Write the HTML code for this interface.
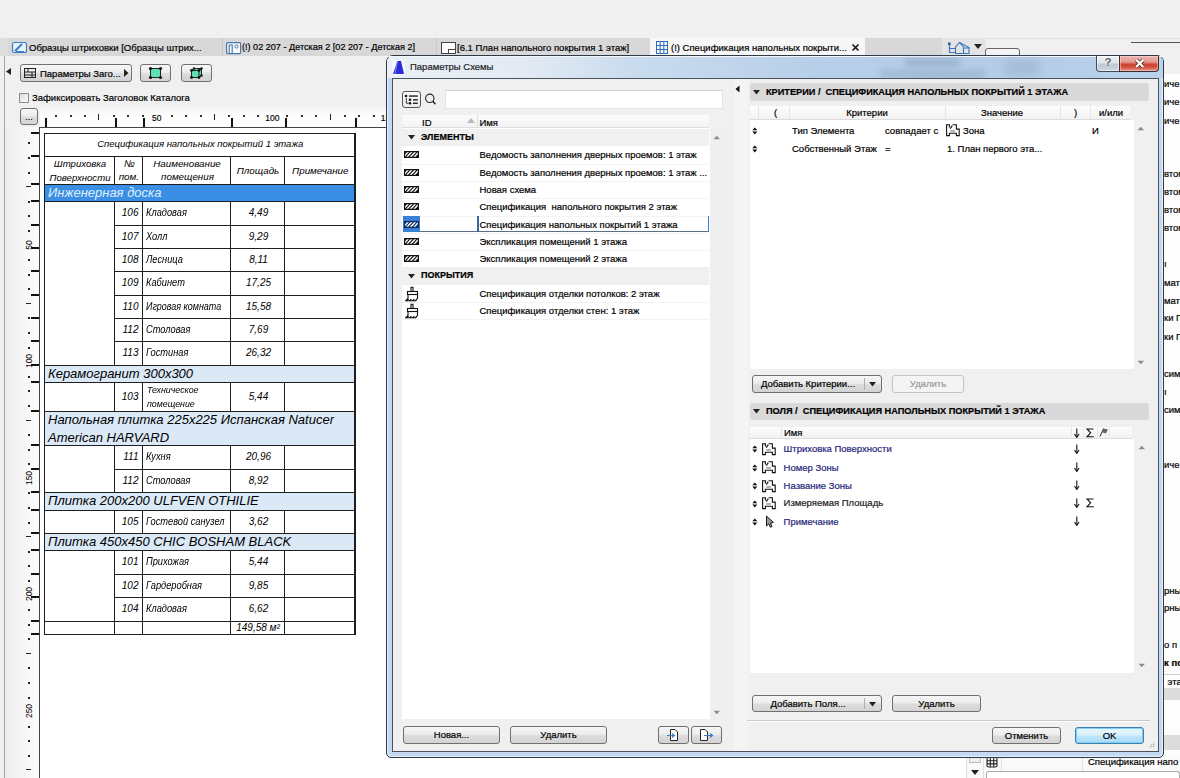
<!DOCTYPE html>
<html><head><meta charset="utf-8"><style>
html,body{margin:0;padding:0;width:1180px;height:778px;overflow:hidden;background:#f0f0f0}
body>div,body>svg{position:absolute}
.t{font-family:"Liberation Sans",sans-serif;white-space:pre;color:#000;-webkit-text-stroke:0.2px currentColor}
</style></head><body>
<div style="left:0px;top:0px;width:1180px;height:778px;background:#f0f0f0"></div>
<div style="left:0px;top:38px;width:942px;height:18px;background:#d8d8d8"></div>
<div style="left:0px;top:38px;width:8px;height:18px;background:#dedede"></div>
<div style="left:650px;top:38px;width:215px;height:18px;background:#f7f7f7"></div>
<div style="left:222px;top:38px;width:1px;height:18px;background:#c9c9c9"></div>
<div style="left:436px;top:38px;width:1px;height:18px;background:#c9c9c9"></div>
<div style="left:942px;top:38px;width:44px;height:18px;background:#e4e4e4"></div>
<div style="left:986px;top:38px;width:194px;height:1px;background:#e2e2e2"></div>
<div style="left:1131px;top:42px;width:49px;height:1px;background:#555"></div>
<div style="left:985px;top:48px;width:35px;height:12px;border:1px solid #666;border-radius:3px;background:#f4f4f4;box-sizing:border-box"></div>
<div class="t " style="left:29px;top:42.92px;font-size:9.5px;line-height:9.5px;">Образцы штриховки [Образцы штрих...</div>
<div class="t " style="left:242px;top:43.11px;font-size:9.1px;line-height:9.1px;">(!) 02 207 - Детская 2 [02 207 - Детская 2]</div>
<div class="t " style="left:457px;top:42.92px;font-size:9.5px;line-height:9.5px;">[6.1 План напольного покрытия 1 этаж]</div>
<div class="t " style="left:671px;top:42.92px;font-size:9.5px;line-height:9.5px;">(!) Спецификация напольных покрыти...</div>
<svg style="left:851px;top:43px" width="9" height="9"><path d="M1.5 1.5 L7.5 7.5 M7.5 1.5 L1.5 7.5" stroke="#111" stroke-width="1.6"/></svg>
<svg style="left:11px;top:41px" width="17" height="13"><rect x="1.5" y="1.5" width="14" height="10" rx="2" fill="#e8f2fb" stroke="#3b7fc4" stroke-width="1.2"/><path d="M4 10 L11 3" stroke="#3b7fc4" stroke-width="2"/><path d="M5 10.5 H13" stroke="#3b7fc4" stroke-width="1"/></svg>
<svg style="left:226px;top:42px" width="16" height="13"><rect x="0.6" y="0.6" width="14" height="11" rx="1" fill="#f4faff" stroke="#4a77a8" stroke-width="1.2"/><path d="M3.2 11.5 V3 H6.2 V11.5" fill="none" stroke="#4a77a8" stroke-width="1.1"/><circle cx="10.5" cy="4.5" r="1.6" fill="none" stroke="#4a77a8" stroke-width="1"/></svg>
<svg style="left:440px;top:41px" width="17" height="14"><rect x="1.5" y="1.5" width="14" height="11" fill="#fff" stroke="#444" stroke-width="1"/><rect x="8.5" y="8.5" width="7" height="4" fill="#fff" stroke="#444" stroke-width="1"/></svg>
<svg style="left:655px;top:40px" width="14" height="15"><g stroke="#2f6fb8" stroke-width="1" fill="none"><rect x="1.5" y="1.5" width="11" height="12"/><path d="M5.2 1.5V13.5M8.8 1.5V13.5M1.5 5.5H12.5M1.5 9.5H12.5"/></g></svg>
<svg style="left:947px;top:41px" width="24" height="14"><g stroke="#3a74c0" stroke-width="1.1" fill="none"><path d="M8.5 12.5V6 L12.5 1.5 L16.5 6 V12.5 Z"/><path d="M12.5 1.5 L22 6.5 V12.5 H16.5 M16.5 7 H22"/><path d="M2.5 3 V11.5 H8 M2.5 7.5 H8"/></g><rect x="1" y="1.5" width="2.6" height="2.6" fill="#2a5fa8"/></svg>
<svg style="left:974px;top:44px" width="9" height="6"><path d="M0 0H8L4 5Z" fill="#222"/></svg>
<div style="left:4px;top:56px;width:1px;height:722px;background:#a3a3a3"></div>
<svg style="left:6px;top:68px" width="6" height="8"><path d="M5 0V7L0 3.5Z" fill="#222"/></svg>
<div style="left:20px;top:64px;width:112px;height:18px;box-sizing:border-box;border:1px solid #707070;border-radius:3px;background:linear-gradient(#f6f6f6,#ececec 45%,#dcdcdc 55%,#d3d3d3);"></div>
<div class="t " style="left:40px;top:68.92px;font-size:9.5px;line-height:9.5px;">Параметры Заго...</div>
<svg style="left:23px;top:67px" width="14" height="12"><g stroke="#222" stroke-width="1" fill="none"><rect x="1.5" y="1.5" width="11" height="9"/><path d="M1.5 5H12.5M1.5 8H12.5M5 1.5V5M9 5V10.5"/></g></svg>
<svg style="left:124px;top:69px" width="5" height="8"><path d="M0 0L4.5 4L0 8Z" fill="#222"/></svg>
<div style="left:140px;top:64px;width:31px;height:18px;box-sizing:border-box;border:1px solid #707070;border-radius:3px;background:linear-gradient(#f6f6f6,#ececec 45%,#dcdcdc 55%,#d3d3d3);"></div>
<svg style="left:148px;top:66px" width="15" height="14"><rect x="2.5" y="2.5" width="10" height="9" fill="#5fe0b0" stroke="#222" stroke-width="1"/><g fill="#111"><circle cx="2.5" cy="2.5" r="1.6"/><circle cx="12.5" cy="2.5" r="1.6"/><circle cx="2.5" cy="11.5" r="1.6"/><circle cx="12.5" cy="11.5" r="1.6"/></g></svg>
<div style="left:181px;top:64px;width:31px;height:18px;box-sizing:border-box;border:1px solid #707070;border-radius:3px;background:linear-gradient(#f6f6f6,#ececec 45%,#dcdcdc 55%,#d3d3d3);"></div>
<svg style="left:189px;top:66px" width="15" height="14"><path d="M2.5 4.5 L5 2.5 H12.5 V9.5 L10 11.5 H2.5 Z" fill="#5fe0b0" stroke="#222" stroke-width="1"/><path d="M2.5 4.5H10V11.5M10 4.5L12.5 2.5" fill="none" stroke="#222"/><g fill="#111"><circle cx="2.5" cy="4.5" r="1.4"/><circle cx="10" cy="4.5" r="1.4"/><circle cx="2.5" cy="11.5" r="1.4"/><circle cx="10" cy="11.5" r="1.4"/><circle cx="5" cy="2.5" r="1.2"/><circle cx="12.5" cy="2.5" r="1.2"/><circle cx="12.5" cy="9.5" r="1.2"/></g></svg>
<div style="left:19px;top:93px;width:10px;height:10px;box-sizing:border-box;border:1px solid #8f8f8f;background:linear-gradient(135deg,#dcdcdc,#fbfbfb)"></div>
<div class="t " style="left:32px;top:93.42px;font-size:9.5px;line-height:9.5px;">Зафиксировать Заголовок Каталога</div>
<div style="left:20px;top:108px;width:18px;height:17px;box-sizing:border-box;border:1px solid #707070;border-radius:3px;background:linear-gradient(#f6f6f6,#ececec 45%,#dcdcdc 55%,#d3d3d3);"></div>
<div class="t " style="left:-121px;width:300px;text-align:center;top:112.66px;font-size:9px;line-height:9px;">...</div>
<div style="left:5px;top:127px;width:35px;height:651px;background:linear-gradient(90deg,#ececec,#f4f4f4 40%,#fdfdfd)"></div>
<div style="left:40px;top:106px;width:350px;height:22px;background:linear-gradient(#f2f2f2,#fdfdfd 40%,#fdfdfd)"></div>
<div style="left:40px;top:128px;width:926px;height:650px;background:#fff"></div>
<div style="left:39px;top:127px;width:1px;height:651px;background:#444"></div>
<div style="left:39px;top:127px;width:351px;height:1px;background:#444"></div>
<div style="left:55px;top:115px;width:2px;height:2px;background:#333"></div>
<div style="left:70px;top:115px;width:2px;height:2px;background:#333"></div>
<div style="left:84px;top:115px;width:2px;height:2px;background:#333"></div>
<div style="left:98px;top:114px;width:1px;height:6px;background:#222"></div>
<div style="left:113px;top:115px;width:2px;height:2px;background:#333"></div>
<div style="left:127px;top:115px;width:2px;height:2px;background:#333"></div>
<div style="left:142px;top:115px;width:2px;height:2px;background:#333"></div>
<div class="t " style="left:6.699999999999989px;width:300px;text-align:center;top:113.50px;font-size:8.5px;line-height:8.5px;-webkit-text-stroke:0.15px">50</div>
<div style="left:171px;top:115px;width:2px;height:2px;background:#333"></div>
<div style="left:185px;top:115px;width:2px;height:2px;background:#333"></div>
<div style="left:200px;top:115px;width:2px;height:2px;background:#333"></div>
<div style="left:214px;top:114px;width:1px;height:6px;background:#222"></div>
<div style="left:228px;top:115px;width:2px;height:2px;background:#333"></div>
<div style="left:243px;top:115px;width:2px;height:2px;background:#333"></div>
<div style="left:257px;top:115px;width:2px;height:2px;background:#333"></div>
<div class="t " style="left:122.30000000000001px;width:300px;text-align:center;top:113.50px;font-size:8.5px;line-height:8.5px;-webkit-text-stroke:0.15px">100</div>
<div style="left:286px;top:115px;width:2px;height:2px;background:#333"></div>
<div style="left:301px;top:115px;width:2px;height:2px;background:#333"></div>
<div style="left:315px;top:115px;width:2px;height:2px;background:#333"></div>
<div style="left:330px;top:114px;width:1px;height:6px;background:#222"></div>
<div style="left:344px;top:115px;width:2px;height:2px;background:#333"></div>
<div style="left:358px;top:115px;width:2px;height:2px;background:#333"></div>
<div style="left:373px;top:115px;width:2px;height:2px;background:#333"></div>
<div class="t " style="left:237.89999999999998px;width:300px;text-align:center;top:113.50px;font-size:8.5px;line-height:8.5px;-webkit-text-stroke:0.15px">150</div>
<div style="left:45px;top:118px;width:1.6000000000000014px;height:9px;background:#111"></div>
<div style="left:115px;top:118px;width:1.5999999999999943px;height:9px;background:#111"></div>
<div style="left:143px;top:118px;width:1.5999999999999943px;height:9px;background:#111"></div>
<div style="left:231px;top:118px;width:1.5999999999999943px;height:9px;background:#111"></div>
<div style="left:285px;top:118px;width:1.6000000000000227px;height:9px;background:#111"></div>
<div style="left:355px;top:118px;width:1.6000000000000227px;height:9px;background:#111"></div>
<div style="left:28.2px;top:142px;width:1.6999999999999993px;height:1.6999999999999886px;background:#222"></div>
<div style="left:28.2px;top:157px;width:1.6999999999999993px;height:1.6999999999999886px;background:#222"></div>
<div style="left:28.2px;top:172px;width:1.6999999999999993px;height:1.6999999999999886px;background:#222"></div>
<div style="left:26px;top:186px;width:5px;height:1.4000000000000057px;background:#222"></div>
<div style="left:28.2px;top:201px;width:1.6999999999999993px;height:1.6999999999999886px;background:#222"></div>
<div style="left:28.2px;top:215px;width:1.6999999999999993px;height:1.6999999999999886px;background:#222"></div>
<div style="left:28.2px;top:230px;width:1.6999999999999993px;height:1.6999999999999886px;background:#222"></div>
<div class="t" style="left:13.7px;top:239.54000000000002px;width:30px;height:10px;font-size:8.5px;line-height:10px;text-align:center;transform:rotate(-90deg);-webkit-text-stroke:0">50</div>
<div style="left:28.2px;top:259px;width:1.6999999999999993px;height:1.6999999999999886px;background:#222"></div>
<div style="left:28.2px;top:274px;width:1.6999999999999993px;height:1.6999999999999886px;background:#222"></div>
<div style="left:28.2px;top:288px;width:1.6999999999999993px;height:1.6999999999999886px;background:#222"></div>
<div style="left:26px;top:303px;width:5px;height:1.3999999999999773px;background:#222"></div>
<div style="left:28.2px;top:317px;width:1.6999999999999993px;height:1.6999999999999886px;background:#222"></div>
<div style="left:28.2px;top:332px;width:1.6999999999999993px;height:1.6999999999999886px;background:#222"></div>
<div style="left:28.2px;top:347px;width:1.6999999999999993px;height:1.6999999999999886px;background:#222"></div>
<div class="t" style="left:13.7px;top:356.18px;width:30px;height:10px;font-size:8.5px;line-height:10px;text-align:center;transform:rotate(-90deg);-webkit-text-stroke:0">100</div>
<div style="left:28.2px;top:376px;width:1.6999999999999993px;height:1.6999999999999886px;background:#222"></div>
<div style="left:28.2px;top:390px;width:1.6999999999999993px;height:1.6999999999999886px;background:#222"></div>
<div style="left:28.2px;top:405px;width:1.6999999999999993px;height:1.6999999999999886px;background:#222"></div>
<div style="left:26px;top:420px;width:5px;height:1.3999999999999773px;background:#222"></div>
<div style="left:28.2px;top:434px;width:1.6999999999999993px;height:1.6999999999999886px;background:#222"></div>
<div style="left:28.2px;top:449px;width:1.6999999999999993px;height:1.6999999999999886px;background:#222"></div>
<div style="left:28.2px;top:463px;width:1.6999999999999993px;height:1.6999999999999886px;background:#222"></div>
<div class="t" style="left:13.7px;top:472.82000000000005px;width:30px;height:10px;font-size:8.5px;line-height:10px;text-align:center;transform:rotate(-90deg);-webkit-text-stroke:0">150</div>
<div style="left:28.2px;top:492px;width:1.6999999999999993px;height:1.6999999999999886px;background:#222"></div>
<div style="left:28.2px;top:507px;width:1.6999999999999993px;height:1.6999999999999886px;background:#222"></div>
<div style="left:28.2px;top:522px;width:1.6999999999999993px;height:1.7000000000000455px;background:#222"></div>
<div style="left:26px;top:536px;width:5px;height:1.3999999999999773px;background:#222"></div>
<div style="left:28.2px;top:551px;width:1.6999999999999993px;height:1.7000000000000455px;background:#222"></div>
<div style="left:28.2px;top:565px;width:1.6999999999999993px;height:1.7000000000000455px;background:#222"></div>
<div style="left:28.2px;top:580px;width:1.6999999999999993px;height:1.7000000000000455px;background:#222"></div>
<div class="t" style="left:13.7px;top:589.46px;width:30px;height:10px;font-size:8.5px;line-height:10px;text-align:center;transform:rotate(-90deg);-webkit-text-stroke:0">200</div>
<div style="left:28.2px;top:609px;width:1.6999999999999993px;height:1.7000000000000455px;background:#222"></div>
<div style="left:28.2px;top:624px;width:1.6999999999999993px;height:1.7000000000000455px;background:#222"></div>
<div style="left:28.2px;top:638px;width:1.6999999999999993px;height:1.7000000000000455px;background:#222"></div>
<div style="left:26px;top:653px;width:5px;height:1.3999999999999773px;background:#222"></div>
<div style="left:28.2px;top:667px;width:1.6999999999999993px;height:1.7000000000000455px;background:#222"></div>
<div style="left:28.2px;top:682px;width:1.6999999999999993px;height:1.7000000000000455px;background:#222"></div>
<div style="left:28.2px;top:697px;width:1.6999999999999993px;height:1.7000000000000455px;background:#222"></div>
<div class="t" style="left:13.7px;top:706.1px;width:30px;height:10px;font-size:8.5px;line-height:10px;text-align:center;transform:rotate(-90deg);-webkit-text-stroke:0">250</div>
<div style="left:28.2px;top:726px;width:1.6999999999999993px;height:1.7000000000000455px;background:#222"></div>
<div style="left:28.2px;top:740px;width:1.6999999999999993px;height:1.7000000000000455px;background:#222"></div>
<div style="left:28.2px;top:755px;width:1.6999999999999993px;height:1.7000000000000455px;background:#222"></div>
<div style="left:26px;top:769px;width:5px;height:1.3999999999999773px;background:#222"></div>
<div style="left:30.5px;top:132.2px;width:8.0px;height:2.0px;background:#111"></div>
<div style="left:30.5px;top:155.2px;width:8.0px;height:2.0px;background:#111"></div>
<div style="left:30.5px;top:183.2px;width:8.0px;height:2.0px;background:#111"></div>
<div style="left:30.5px;top:200.2px;width:8.0px;height:2.0px;background:#111"></div>
<div style="left:30.5px;top:224.2px;width:8.0px;height:2.0px;background:#111"></div>
<div style="left:30.5px;top:247.2px;width:8.0px;height:2.0px;background:#111"></div>
<div style="left:30.5px;top:270.2px;width:8.0px;height:2.0px;background:#111"></div>
<div style="left:30.5px;top:294.2px;width:8.0px;height:2.0px;background:#111"></div>
<div style="left:30.5px;top:317.2px;width:8.0px;height:2.0px;background:#111"></div>
<div style="left:30.5px;top:340.2px;width:8.0px;height:2.0px;background:#111"></div>
<div style="left:30.5px;top:364.2px;width:8.0px;height:2.0px;background:#111"></div>
<div style="left:30.5px;top:381.2px;width:8.0px;height:2.0px;background:#111"></div>
<div style="left:30.5px;top:410.2px;width:8.0px;height:2.0px;background:#111"></div>
<div style="left:30.5px;top:444.2px;width:8.0px;height:2.0px;background:#111"></div>
<div style="left:30.5px;top:468.2px;width:8.0px;height:2.0px;background:#111"></div>
<div style="left:30.5px;top:491.2px;width:8.0px;height:2.0px;background:#111"></div>
<div style="left:30.5px;top:509.2px;width:8.0px;height:2.0px;background:#111"></div>
<div style="left:30.5px;top:532.2px;width:8.0px;height:2.0px;background:#111"></div>
<div style="left:30.5px;top:549.2px;width:8.0px;height:2.0px;background:#111"></div>
<div style="left:30.5px;top:573.2px;width:8.0px;height:2.0px;background:#111"></div>
<div style="left:30.5px;top:596.2px;width:8.0px;height:2.0px;background:#111"></div>
<div style="left:30.5px;top:620.2px;width:8.0px;height:2.0px;background:#111"></div>
<div style="left:30.5px;top:633.2px;width:8.0px;height:2.0px;background:#111"></div>
<div style="left:45px;top:184px;width:310px;height:17px;background:#3a8ee4"></div>
<div style="left:45px;top:365px;width:310px;height:17px;background:#dbe9f7"></div>
<div style="left:45px;top:411px;width:310px;height:34px;background:#dbe9f7"></div>
<div style="left:45px;top:492px;width:310px;height:18px;background:#dbe9f7"></div>
<div style="left:45px;top:533px;width:310px;height:17px;background:#dbe9f7"></div>
<div style="left:44px;top:132.9px;width:312px;height:1.299999999999983px;background:#1e1e1e"></div>
<div style="left:44px;top:155.9px;width:312px;height:1.299999999999983px;background:#1e1e1e"></div>
<div style="left:44px;top:183.9px;width:312px;height:1.299999999999983px;background:#1e1e1e"></div>
<div style="left:44px;top:200.9px;width:312px;height:1.299999999999983px;background:#1e1e1e"></div>
<div style="left:44px;top:364.9px;width:312px;height:1.3000000000000114px;background:#1e1e1e"></div>
<div style="left:44px;top:381.9px;width:312px;height:1.3000000000000114px;background:#1e1e1e"></div>
<div style="left:44px;top:410.9px;width:312px;height:1.3000000000000114px;background:#1e1e1e"></div>
<div style="left:44px;top:444.9px;width:312px;height:1.3000000000000114px;background:#1e1e1e"></div>
<div style="left:44px;top:491.9px;width:312px;height:1.3000000000000114px;background:#1e1e1e"></div>
<div style="left:44px;top:509.9px;width:312px;height:1.3000000000000114px;background:#1e1e1e"></div>
<div style="left:44px;top:532.9px;width:312px;height:1.3000000000000682px;background:#1e1e1e"></div>
<div style="left:44px;top:549.9px;width:312px;height:1.3000000000000682px;background:#1e1e1e"></div>
<div style="left:44px;top:620.9px;width:312px;height:1.3000000000000682px;background:#1e1e1e"></div>
<div style="left:44px;top:633.9px;width:312px;height:1.3000000000000682px;background:#1e1e1e"></div>
<div style="left:114px;top:224.9px;width:242px;height:1.299999999999983px;background:#1e1e1e"></div>
<div style="left:114px;top:247.9px;width:242px;height:1.299999999999983px;background:#1e1e1e"></div>
<div style="left:114px;top:270.9px;width:242px;height:1.3000000000000114px;background:#1e1e1e"></div>
<div style="left:114px;top:294.9px;width:242px;height:1.3000000000000114px;background:#1e1e1e"></div>
<div style="left:114px;top:317.9px;width:242px;height:1.3000000000000114px;background:#1e1e1e"></div>
<div style="left:114px;top:340.9px;width:242px;height:1.3000000000000114px;background:#1e1e1e"></div>
<div style="left:114px;top:468.9px;width:242px;height:1.3000000000000114px;background:#1e1e1e"></div>
<div style="left:114px;top:573.9px;width:242px;height:1.3000000000000682px;background:#1e1e1e"></div>
<div style="left:114px;top:596.9px;width:242px;height:1.3000000000000682px;background:#1e1e1e"></div>
<div style="left:43.9px;top:133px;width:1.3000000000000043px;height:501px;background:#1e1e1e"></div>
<div style="left:354.4px;top:133px;width:1.3000000000000114px;height:501px;background:#1e1e1e"></div>
<div style="left:113.9px;top:156px;width:1.2999999999999972px;height:28px;background:#1e1e1e"></div>
<div style="left:141.9px;top:156px;width:1.299999999999983px;height:28px;background:#1e1e1e"></div>
<div style="left:229.9px;top:156px;width:1.299999999999983px;height:28px;background:#1e1e1e"></div>
<div style="left:283.9px;top:156px;width:1.3000000000000114px;height:28px;background:#1e1e1e"></div>
<div style="left:113.9px;top:201px;width:1.2999999999999972px;height:164px;background:#1e1e1e"></div>
<div style="left:141.9px;top:201px;width:1.299999999999983px;height:164px;background:#1e1e1e"></div>
<div style="left:229.9px;top:201px;width:1.299999999999983px;height:164px;background:#1e1e1e"></div>
<div style="left:283.9px;top:201px;width:1.3000000000000114px;height:164px;background:#1e1e1e"></div>
<div style="left:113.9px;top:382px;width:1.2999999999999972px;height:29px;background:#1e1e1e"></div>
<div style="left:141.9px;top:382px;width:1.299999999999983px;height:29px;background:#1e1e1e"></div>
<div style="left:229.9px;top:382px;width:1.299999999999983px;height:29px;background:#1e1e1e"></div>
<div style="left:283.9px;top:382px;width:1.3000000000000114px;height:29px;background:#1e1e1e"></div>
<div style="left:113.9px;top:445px;width:1.2999999999999972px;height:47px;background:#1e1e1e"></div>
<div style="left:141.9px;top:445px;width:1.299999999999983px;height:47px;background:#1e1e1e"></div>
<div style="left:229.9px;top:445px;width:1.299999999999983px;height:47px;background:#1e1e1e"></div>
<div style="left:283.9px;top:445px;width:1.3000000000000114px;height:47px;background:#1e1e1e"></div>
<div style="left:113.9px;top:510px;width:1.2999999999999972px;height:23px;background:#1e1e1e"></div>
<div style="left:141.9px;top:510px;width:1.299999999999983px;height:23px;background:#1e1e1e"></div>
<div style="left:229.9px;top:510px;width:1.299999999999983px;height:23px;background:#1e1e1e"></div>
<div style="left:283.9px;top:510px;width:1.3000000000000114px;height:23px;background:#1e1e1e"></div>
<div style="left:113.9px;top:550px;width:1.2999999999999972px;height:84px;background:#1e1e1e"></div>
<div style="left:141.9px;top:550px;width:1.299999999999983px;height:84px;background:#1e1e1e"></div>
<div style="left:229.9px;top:550px;width:1.299999999999983px;height:84px;background:#1e1e1e"></div>
<div style="left:283.9px;top:550px;width:1.3000000000000114px;height:84px;background:#1e1e1e"></div>
<div class="t " style="left:50.19999999999999px;width:300px;text-align:center;top:139.42px;font-size:9.5px;line-height:9.5px;font-style:italic;-webkit-text-stroke:0;">Спецификация напольных покрытий 1 этажа</div>
<div class="t " style="left:-70px;width:300px;text-align:center;top:159.37px;font-size:9.6px;line-height:9.6px;font-style:italic;-webkit-text-stroke:0;">Штриховка</div>
<div class="t " style="left:-70px;width:300px;text-align:center;top:172.57px;font-size:9.6px;line-height:9.6px;font-style:italic;-webkit-text-stroke:0;">Поверхности</div>
<div class="t " style="left:-21px;width:300px;text-align:center;top:159.28px;font-size:9.8px;line-height:9.8px;font-style:italic;-webkit-text-stroke:0;">№</div>
<div class="t " style="left:-21.19999999999999px;width:300px;text-align:center;top:172.28px;font-size:9.8px;line-height:9.8px;font-style:italic;-webkit-text-stroke:0;">пом.</div>
<div class="t " style="left:37px;width:300px;text-align:center;top:159.28px;font-size:9.8px;line-height:9.8px;font-style:italic;-webkit-text-stroke:0;">Наименование</div>
<div class="t " style="left:37.5px;width:300px;text-align:center;top:172.08px;font-size:9.8px;line-height:9.8px;font-style:italic;-webkit-text-stroke:0;">помещения</div>
<div class="t " style="left:108px;width:300px;text-align:center;top:166.08px;font-size:9.8px;line-height:9.8px;font-style:italic;-webkit-text-stroke:0;">Площадь</div>
<div class="t " style="left:170.3px;width:300px;text-align:center;top:166.08px;font-size:9.8px;line-height:9.8px;font-style:italic;-webkit-text-stroke:0;">Примечание</div>
<div class="t " style="left:48px;top:186.23px;font-size:13px;line-height:13px;font-style:italic;-webkit-text-stroke:0;color:#dff0ff">Инженерная доска</div>
<div class="t " style="left:48px;top:367.23px;font-size:13px;line-height:13px;font-style:italic;-webkit-text-stroke:0;">Керамогранит 300x300</div>
<div class="t " style="left:48px;top:413.23px;font-size:13px;line-height:13px;font-style:italic;-webkit-text-stroke:0;">Напольная плитка 225x225 Испанская Natucer</div>
<div class="t " style="left:48px;top:430.73px;font-size:13px;line-height:13px;font-style:italic;-webkit-text-stroke:0;">American HARVARD</div>
<div class="t " style="left:48px;top:494.23px;font-size:13px;line-height:13px;font-style:italic;-webkit-text-stroke:0;">Плитка 200x200 ULFVEN OTHILIE</div>
<div class="t " style="left:48px;top:535.23px;font-size:13px;line-height:13px;font-style:italic;-webkit-text-stroke:0;">Плитка 450x450 CHIC BOSHAM BLACK</div>
<div class="t " style="left:-161.5px;width:300px;text-align:right;top:208.18px;font-size:10px;line-height:10px;font-style:italic;-webkit-text-stroke:0;">106</div>
<div class="t " style="left:146px;top:208.04px;font-size:10.3px;line-height:10.3px;font-style:italic;-webkit-text-stroke:0;;transform:scaleX(0.9);transform-origin:left">Кладовая</div>
<div class="t " style="left:108.5px;width:300px;text-align:center;top:208.18px;font-size:10px;line-height:10px;font-style:italic;-webkit-text-stroke:0;">4,49</div>
<div class="t " style="left:-161.5px;width:300px;text-align:right;top:231.68px;font-size:10px;line-height:10px;font-style:italic;-webkit-text-stroke:0;">107</div>
<div class="t " style="left:146px;top:231.54px;font-size:10.3px;line-height:10.3px;font-style:italic;-webkit-text-stroke:0;;transform:scaleX(0.9);transform-origin:left">Холл</div>
<div class="t " style="left:108.5px;width:300px;text-align:center;top:231.68px;font-size:10px;line-height:10px;font-style:italic;-webkit-text-stroke:0;">9,29</div>
<div class="t " style="left:-161.5px;width:300px;text-align:right;top:254.68px;font-size:10px;line-height:10px;font-style:italic;-webkit-text-stroke:0;">108</div>
<div class="t " style="left:146px;top:254.54px;font-size:10.3px;line-height:10.3px;font-style:italic;-webkit-text-stroke:0;;transform:scaleX(0.9);transform-origin:left">Лесница</div>
<div class="t " style="left:108.5px;width:300px;text-align:center;top:254.68px;font-size:10px;line-height:10px;font-style:italic;-webkit-text-stroke:0;">8,11</div>
<div class="t " style="left:-161.5px;width:300px;text-align:right;top:278.18px;font-size:10px;line-height:10px;font-style:italic;-webkit-text-stroke:0;">109</div>
<div class="t " style="left:146px;top:278.04px;font-size:10.3px;line-height:10.3px;font-style:italic;-webkit-text-stroke:0;;transform:scaleX(0.9);transform-origin:left">Кабинет</div>
<div class="t " style="left:108.5px;width:300px;text-align:center;top:278.18px;font-size:10px;line-height:10px;font-style:italic;-webkit-text-stroke:0;">17,25</div>
<div class="t " style="left:-161.5px;width:300px;text-align:right;top:301.68px;font-size:10px;line-height:10px;font-style:italic;-webkit-text-stroke:0;">110</div>
<div class="t " style="left:146px;top:301.54px;font-size:10.3px;line-height:10.3px;font-style:italic;-webkit-text-stroke:0;;transform:scaleX(0.87);transform-origin:left">Игровая комната</div>
<div class="t " style="left:108.5px;width:300px;text-align:center;top:301.68px;font-size:10px;line-height:10px;font-style:italic;-webkit-text-stroke:0;">15,58</div>
<div class="t " style="left:-161.5px;width:300px;text-align:right;top:324.68px;font-size:10px;line-height:10px;font-style:italic;-webkit-text-stroke:0;">112</div>
<div class="t " style="left:146px;top:324.54px;font-size:10.3px;line-height:10.3px;font-style:italic;-webkit-text-stroke:0;;transform:scaleX(0.9);transform-origin:left">Столовая</div>
<div class="t " style="left:108.5px;width:300px;text-align:center;top:324.68px;font-size:10px;line-height:10px;font-style:italic;-webkit-text-stroke:0;">7,69</div>
<div class="t " style="left:-161.5px;width:300px;text-align:right;top:348.18px;font-size:10px;line-height:10px;font-style:italic;-webkit-text-stroke:0;">113</div>
<div class="t " style="left:146px;top:348.04px;font-size:10.3px;line-height:10.3px;font-style:italic;-webkit-text-stroke:0;;transform:scaleX(0.9);transform-origin:left">Гостиная</div>
<div class="t " style="left:108.5px;width:300px;text-align:center;top:348.18px;font-size:10px;line-height:10px;font-style:italic;-webkit-text-stroke:0;">26,32</div>
<div class="t " style="left:-161.5px;width:300px;text-align:right;top:391.68px;font-size:10px;line-height:10px;font-style:italic;-webkit-text-stroke:0;">103</div>
<div class="t " style="left:146.5px;top:384.98px;font-size:9.8px;line-height:9.8px;font-style:italic;-webkit-text-stroke:0;;transform:scaleX(0.9);transform-origin:left">Техническое</div>
<div class="t " style="left:146.5px;top:398.58px;font-size:9.8px;line-height:9.8px;font-style:italic;-webkit-text-stroke:0;;transform:scaleX(0.9);transform-origin:left">помещение</div>
<div class="t " style="left:108.5px;width:300px;text-align:center;top:391.68px;font-size:10px;line-height:10px;font-style:italic;-webkit-text-stroke:0;">5,44</div>
<div class="t " style="left:-161.5px;width:300px;text-align:right;top:452.18px;font-size:10px;line-height:10px;font-style:italic;-webkit-text-stroke:0;">111</div>
<div class="t " style="left:146px;top:452.04px;font-size:10.3px;line-height:10.3px;font-style:italic;-webkit-text-stroke:0;;transform:scaleX(0.9);transform-origin:left">Кухня</div>
<div class="t " style="left:108.5px;width:300px;text-align:center;top:452.18px;font-size:10px;line-height:10px;font-style:italic;-webkit-text-stroke:0;">20,96</div>
<div class="t " style="left:-161.5px;width:300px;text-align:right;top:475.68px;font-size:10px;line-height:10px;font-style:italic;-webkit-text-stroke:0;">112</div>
<div class="t " style="left:146px;top:475.54px;font-size:10.3px;line-height:10.3px;font-style:italic;-webkit-text-stroke:0;;transform:scaleX(0.9);transform-origin:left">Столовая</div>
<div class="t " style="left:108.5px;width:300px;text-align:center;top:475.68px;font-size:10px;line-height:10px;font-style:italic;-webkit-text-stroke:0;">8,92</div>
<div class="t " style="left:-161.5px;width:300px;text-align:right;top:516.68px;font-size:10px;line-height:10px;font-style:italic;-webkit-text-stroke:0;">105</div>
<div class="t " style="left:146px;top:516.54px;font-size:10.3px;line-height:10.3px;font-style:italic;-webkit-text-stroke:0;;transform:scaleX(0.9);transform-origin:left">Гостевой санузел</div>
<div class="t " style="left:108.5px;width:300px;text-align:center;top:516.68px;font-size:10px;line-height:10px;font-style:italic;-webkit-text-stroke:0;">3,62</div>
<div class="t " style="left:-161.5px;width:300px;text-align:right;top:557.18px;font-size:10px;line-height:10px;font-style:italic;-webkit-text-stroke:0;">101</div>
<div class="t " style="left:146px;top:557.04px;font-size:10.3px;line-height:10.3px;font-style:italic;-webkit-text-stroke:0;;transform:scaleX(0.9);transform-origin:left">Прихожая</div>
<div class="t " style="left:108.5px;width:300px;text-align:center;top:557.18px;font-size:10px;line-height:10px;font-style:italic;-webkit-text-stroke:0;">5,44</div>
<div class="t " style="left:-161.5px;width:300px;text-align:right;top:580.68px;font-size:10px;line-height:10px;font-style:italic;-webkit-text-stroke:0;">102</div>
<div class="t " style="left:146px;top:580.54px;font-size:10.3px;line-height:10.3px;font-style:italic;-webkit-text-stroke:0;;transform:scaleX(0.9);transform-origin:left">Гардеробная</div>
<div class="t " style="left:108.5px;width:300px;text-align:center;top:580.68px;font-size:10px;line-height:10px;font-style:italic;-webkit-text-stroke:0;">9,85</div>
<div class="t " style="left:-161.5px;width:300px;text-align:right;top:604.18px;font-size:10px;line-height:10px;font-style:italic;-webkit-text-stroke:0;">104</div>
<div class="t " style="left:146px;top:604.04px;font-size:10.3px;line-height:10.3px;font-style:italic;-webkit-text-stroke:0;;transform:scaleX(0.9);transform-origin:left">Кладовая</div>
<div class="t " style="left:108.5px;width:300px;text-align:center;top:604.18px;font-size:10px;line-height:10px;font-style:italic;-webkit-text-stroke:0;">6,62</div>
<div class="t " style="left:108px;width:300px;text-align:center;top:622.68px;font-size:10px;line-height:10px;font-style:italic;-webkit-text-stroke:0;">149,58 м²</div>
<div style="left:1163px;top:74px;width:17px;height:683px;background:#fdfdfd"></div>
<div class="t " style="left:1164px;top:78.92px;font-size:9.5px;line-height:9.5px;">иче</div>
<div class="t " style="left:1164px;top:97.42px;font-size:9.5px;line-height:9.5px;">иче</div>
<div class="t " style="left:1164px;top:115.72px;font-size:9.5px;line-height:9.5px;">иче</div>
<div class="t " style="left:1164px;top:169.22px;font-size:9.5px;line-height:9.5px;">втом</div>
<div class="t " style="left:1164px;top:186.72px;font-size:9.5px;line-height:9.5px;">втом</div>
<div class="t " style="left:1164px;top:205.32px;font-size:9.5px;line-height:9.5px;">втом</div>
<div class="t " style="left:1164px;top:222.72px;font-size:9.5px;line-height:9.5px;">втом</div>
<div class="t " style="left:1164px;top:259.42px;font-size:9.5px;line-height:9.5px;">ı</div>
<div class="t " style="left:1164px;top:278.42px;font-size:9.5px;line-height:9.5px;">мат</div>
<div class="t " style="left:1164px;top:296.42px;font-size:9.5px;line-height:9.5px;">мат</div>
<div class="t " style="left:1164px;top:313.42px;font-size:9.5px;line-height:9.5px;">ки П</div>
<div class="t " style="left:1164px;top:332.42px;font-size:9.5px;line-height:9.5px;">ки П</div>
<div class="t " style="left:1164px;top:369.42px;font-size:9.5px;line-height:9.5px;">сим</div>
<div class="t " style="left:1164px;top:387.42px;font-size:9.5px;line-height:9.5px;">ı</div>
<div class="t " style="left:1164px;top:405.42px;font-size:9.5px;line-height:9.5px;">симы</div>
<div class="t " style="left:1164px;top:460.12px;font-size:9.5px;line-height:9.5px;">иче</div>
<div class="t " style="left:1164px;top:586.42px;font-size:9.5px;line-height:9.5px;">рны</div>
<div class="t " style="left:1164px;top:603.42px;font-size:9.5px;line-height:9.5px;">рны</div>
<div class="t " style="left:1164px;top:640.42px;font-size:9.5px;line-height:9.5px;">о п</div>
<div class="t " style="left:1164px;top:658.42px;font-size:9.5px;line-height:9.5px;font-weight:bold">к по</div>
<div style="left:1163px;top:674px;width:17px;height:13px;background:#fff;border-top:1px solid #ccc;box-sizing:border-box"></div>
<div class="t " style="left:1167.5px;top:676.62px;font-size:9.5px;line-height:9.5px;">эта</div>
<div style="left:1163px;top:688px;width:17px;height:12px;background:#dcdcdc"></div>
<div style="left:1163px;top:735px;width:17px;height:15px;background:#dcdcdc"></div>
<div style="left:966px;top:757px;width:214px;height:21px;background:#fafafa"></div>
<div style="left:966px;top:757px;width:1px;height:21px;background:#ddd"></div>
<div style="left:969px;top:757px;width:12px;height:6px;border:1px solid #bbb;background:#eee;box-sizing:border-box"></div>
<div style="left:983px;top:757px;width:1px;height:21px;background:#e0e0e0"></div>
<svg style="left:986px;top:757px" width="12" height="11"><g stroke="#222" stroke-width="1.1" fill="none"><rect x="1" y="0.5" width="10" height="9.5" rx="1.5"/><path d="M4.3 0.5V10M7.7 0.5V10M1 3.7H11M1 6.9H11"/></g></svg>
<div style="left:1001px;top:757px;width:1px;height:14px;background:#e2e2e2"></div>
<div style="left:1082px;top:757px;width:1px;height:14px;background:#e2e2e2"></div>
<div class="t " style="left:1088px;top:757.42px;font-size:9.5px;line-height:9.5px;">Спецификация напо</div>
<svg style="left:971px;top:770px" width="9" height="6"><path d="M0 0H8L4 5Z" fill="#222"/></svg>
<div style="left:986px;top:771px;width:194px;height:7px;border:1px solid #aaa;border-bottom:none;border-radius:3px 3px 0 0;background:#fff;box-sizing:border-box"></div>
<div style="left:386px;top:55px;width:778px;height:703px;box-sizing:border-box;border:1px solid #2e3a46;border-radius:7px 7px 5px 5px;background:#c4daf2;box-shadow:inset 0 0 0 1px #e6f1fb"></div>
<div style="left:387px;top:56px;width:776px;height:22px;border-radius:6px 6px 0 0;background:linear-gradient(90deg,#eaf0f6 0%,#e2eaf4 18%,#c9dbee 32%,#b8cfe9 55%,#b4cce8 80%,#bad2ec 100%)"></div>
<div style="left:387px;top:56px;width:776px;height:1px;background:#f4f8fc"></div>
<div style="left:905px;top:59px;width:55px;height:7px;background:#7f98b5;filter:blur(3px);opacity:.55"></div>
<div style="left:880px;top:70px;width:105px;height:8px;background:#8aa3bf;filter:blur(3px);opacity:.5"></div>
<div style="left:1005px;top:60px;width:35px;height:16px;background:#8fa6c0;filter:blur(4px);opacity:.4"></div>
<svg style="left:392px;top:60px" width="13" height="15"><rect x="0" y="0" width="13" height="15" fill="#f4f6fb"/><path d="M1 14 L5.5 1 H9 L12 14 Z" fill="#2b2bd9"/><path d="M5.5 1 L3 14" stroke="#7b8cf0" stroke-width="1"/></svg>
<div class="t " style="left:410px;top:62.22px;font-size:9.5px;line-height:9.5px;color:#1e1e1e">Параметры Схемы</div>
<div style="left:1096px;top:56px;width:24px;height:16px;box-sizing:border-box;border:1px solid #3f4a56;border-top:none;border-radius:0 0 0 4px;background:linear-gradient(#f0f3f7,#dce2e9 45%,#bfc8d2 55%,#ccd4dc);box-shadow:inset 0 0 0 1px rgba(255,255,255,.6)"></div>
<div class="t " style="left:958px;width:300px;text-align:center;top:57.46px;font-size:11.5px;line-height:11.5px;color:#5a5f66;font-weight:bold;-webkit-text-stroke:0;text-shadow:0 0 1px #fff,0 0 2px #fff">?</div>
<div style="left:1119px;top:56px;width:40px;height:16px;box-sizing:border-box;border:1px solid #3d2a2a;border-top:none;border-radius:0 0 4px 0;background:linear-gradient(#ecb4ae,#e39a90 40%,#cf4535 55%,#d24a36 70%,#e2958a);box-shadow:inset 0 0 0 1px rgba(255,220,220,.5)"></div>
<svg style="left:1134px;top:58px" width="12" height="11"><path d="M2.2 1.8 L9.3 9 M9.3 1.8 L2.2 9" stroke="#4a1812" stroke-width="3.8" opacity=".8"/><path d="M2.2 1.8 L9.3 9 M9.3 1.8 L2.2 9" stroke="#fff" stroke-width="2.3"/></svg>
<div style="left:392px;top:78px;width:767px;height:674px;box-sizing:border-box;border:1px solid #48525c;background:#f0f0f0"></div>
<div style="left:734px;top:79px;width:14px;height:672px;background:#f4f4f4"></div>
<div style="left:402px;top:91px;width:19px;height:17px;box-sizing:border-box;border:1.5px solid #555;border-radius:3px;background:linear-gradient(#fbfbfb,#ececec)"></div>
<svg style="left:404px;top:94px" width="15" height="12"><g fill="#111"><circle cx="2" cy="2" r="1.3"/><circle cx="6" cy="5.8" r="1.3"/><circle cx="6" cy="9.2" r="1.3"/><rect x="5" y="1.4" width="8.8" height="1.3"/><rect x="9" y="5.2" width="4.8" height="1.3"/><rect x="9" y="8.6" width="4.8" height="1.3"/></g><path d="M2.3 4 V9.2 H4.3" fill="none" stroke="#222" stroke-width="0.9"/></svg>
<svg style="left:424px;top:92px" width="14" height="14"><circle cx="5.8" cy="6.3" r="4.2" fill="none" stroke="#222" stroke-width="1.1"/><path d="M8.8 9.3 L11.5 12.3" stroke="#222" stroke-width="1.4"/></svg>
<div style="left:445px;top:90px;width:278px;height:19px;box-sizing:border-box;border:1px solid #e2e2e2;border-top-color:#d0d0d0;background:#fff"></div>
<div style="left:402px;top:115px;width:307px;height:13px;background:linear-gradient(#fbfbfb,#f3f3f3);border-bottom:1px solid #dedede;box-sizing:border-box"></div>
<div style="left:477px;top:115px;width:1px;height:13px;background:#e0e0e0"></div>
<div class="t " style="left:422px;top:117.62px;font-size:9.5px;line-height:9.5px;">ID</div>
<svg style="left:467px;top:118px" width="9" height="6"><path d="M0 5H8L4 0Z" fill="#bbb"/></svg>
<div class="t " style="left:479.5px;top:117.62px;font-size:9.5px;line-height:9.5px;">Имя</div>
<div style="left:402px;top:128px;width:308px;height:591px;background:#fff"></div>
<div style="left:710px;top:128px;width:24px;height:591px;background:#efefef"></div>
<svg style="left:713px;top:135px" width="8" height="5"><path d="M0.5 4.2 L3.8 0.8 L7 4.2 Z" fill="#8a8a8a"/></svg>
<svg style="left:712.5px;top:710px" width="8" height="5"><path d="M0.5 0.8 L3.8 4.2 L7 0.8 Z" fill="#8a8a8a"/></svg>
<div style="left:402px;top:129px;width:307px;height:17.30000000000001px;background:#f0f0f0"></div>
<svg style="left:408px;top:135.15px" width="8" height="5"><path d="M0 0H7L3.5 4.5Z" fill="#222"/></svg>
<div class="t " style="left:421px;top:133.07px;font-size:9.5px;line-height:9.5px;font-weight:bold;font-size:9px">ЭЛЕМЕНТЫ</div>
<div style="left:402px;top:163.5px;width:307px;height:1.0px;background:#f3f3f3"></div>
<svg style="left:404px;top:151px" width="15" height="7"><defs><clipPath id="h0"><rect x="1.2" y="1.2" width="12.6" height="4.6"/></clipPath></defs><rect x="0" y="0" width="15" height="7" fill="#111"/><g stroke="#fff" stroke-width="1.5" clip-path="url(#h0)"><path d="M-1 6.5 L4.5 0.5 M2.6 6.5 L8.1 0.5 M6.2 6.5 L11.7 0.5 M9.8 6.5 L15.3 0.5"/></g></svg>
<div class="t " style="left:479.5px;top:150.37px;font-size:9.5px;line-height:9.5px;">Ведомость заполнения дверных проемов: 1 этаж</div>
<div style="left:402px;top:180.5px;width:307px;height:1.0px;background:#f3f3f3"></div>
<svg style="left:404px;top:169px" width="15" height="7"><defs><clipPath id="h1"><rect x="1.2" y="1.2" width="12.6" height="4.6"/></clipPath></defs><rect x="0" y="0" width="15" height="7" fill="#111"/><g stroke="#fff" stroke-width="1.5" clip-path="url(#h1)"><path d="M-1 6.5 L4.5 0.5 M2.6 6.5 L8.1 0.5 M6.2 6.5 L11.7 0.5 M9.8 6.5 L15.3 0.5"/></g></svg>
<div class="t " style="left:479.5px;top:167.67px;font-size:9.5px;line-height:9.5px;">Ведомость заполнения дверных проемов: 1 этаж ...</div>
<div style="left:402px;top:197.5px;width:307px;height:1.0px;background:#f3f3f3"></div>
<svg style="left:404px;top:186px" width="15" height="7"><defs><clipPath id="h2"><rect x="1.2" y="1.2" width="12.6" height="4.6"/></clipPath></defs><rect x="0" y="0" width="15" height="7" fill="#111"/><g stroke="#fff" stroke-width="1.5" clip-path="url(#h2)"><path d="M-1 6.5 L4.5 0.5 M2.6 6.5 L8.1 0.5 M6.2 6.5 L11.7 0.5 M9.8 6.5 L15.3 0.5"/></g></svg>
<div class="t " style="left:479.5px;top:184.97px;font-size:9.5px;line-height:9.5px;">Новая схема</div>
<div style="left:402px;top:215.5px;width:307px;height:1.0px;background:#f3f3f3"></div>
<svg style="left:404px;top:203px" width="15" height="7"><defs><clipPath id="h3"><rect x="1.2" y="1.2" width="12.6" height="4.6"/></clipPath></defs><rect x="0" y="0" width="15" height="7" fill="#111"/><g stroke="#fff" stroke-width="1.5" clip-path="url(#h3)"><path d="M-1 6.5 L4.5 0.5 M2.6 6.5 L8.1 0.5 M6.2 6.5 L11.7 0.5 M9.8 6.5 L15.3 0.5"/></g></svg>
<div class="t " style="left:479.5px;top:202.27px;font-size:9.5px;line-height:9.5px;">Спецификация  напольного покрытия 2 этаж</div>
<div style="left:402px;top:232.5px;width:307px;height:1.0px;background:#f3f3f3"></div>
<div style="left:402.5px;top:215.5px;width:17.5px;height:16.30000000000001px;background:#3a7fd6"></div>
<div style="left:420px;top:231.3px;width:289px;height:1.1999999999999886px;background:#5b6f86"></div>
<div style="left:477px;top:215.5px;width:1.5px;height:16.30000000000001px;background:#3a66a6"></div>
<div style="left:707.5px;top:215.5px;width:1.5px;height:16.30000000000001px;background:#3a7fd6"></div>
<svg style="left:404px;top:221px" width="15" height="7"><defs><clipPath id="h4"><rect x="1.2" y="1.2" width="12.6" height="4.6"/></clipPath></defs><rect x="0" y="0" width="15" height="7" fill="#0a2a5c"/><g stroke="#fff" stroke-width="1.5" clip-path="url(#h4)"><path d="M-1 6.5 L4.5 0.5 M2.6 6.5 L8.1 0.5 M6.2 6.5 L11.7 0.5 M9.8 6.5 L15.3 0.5"/></g></svg>
<div class="t " style="left:479.5px;top:219.57px;font-size:9.5px;line-height:9.5px;">Спецификация напольных покрытий 1 этажа</div>
<div style="left:402px;top:249.5px;width:307px;height:1.0px;background:#f3f3f3"></div>
<svg style="left:404px;top:238px" width="15" height="7"><defs><clipPath id="h5"><rect x="1.2" y="1.2" width="12.6" height="4.6"/></clipPath></defs><rect x="0" y="0" width="15" height="7" fill="#111"/><g stroke="#fff" stroke-width="1.5" clip-path="url(#h5)"><path d="M-1 6.5 L4.5 0.5 M2.6 6.5 L8.1 0.5 M6.2 6.5 L11.7 0.5 M9.8 6.5 L15.3 0.5"/></g></svg>
<div class="t " style="left:479.5px;top:236.87px;font-size:9.5px;line-height:9.5px;">Экспликация помещений 1 этажа</div>
<div style="left:402px;top:266.5px;width:307px;height:1.0px;background:#f3f3f3"></div>
<svg style="left:404px;top:255px" width="15" height="7"><defs><clipPath id="h6"><rect x="1.2" y="1.2" width="12.6" height="4.6"/></clipPath></defs><rect x="0" y="0" width="15" height="7" fill="#111"/><g stroke="#fff" stroke-width="1.5" clip-path="url(#h6)"><path d="M-1 6.5 L4.5 0.5 M2.6 6.5 L8.1 0.5 M6.2 6.5 L11.7 0.5 M9.8 6.5 L15.3 0.5"/></g></svg>
<div class="t " style="left:479.5px;top:254.17px;font-size:9.5px;line-height:9.5px;">Экспликация помещений 2 этажа</div>
<div style="left:402px;top:267.4px;width:307px;height:17.30000000000001px;background:#f0f0f0"></div>
<svg style="left:408px;top:273.54999999999995px" width="8" height="5"><path d="M0 0H7L3.5 4.5Z" fill="#222"/></svg>
<div class="t " style="left:421px;top:271.47px;font-size:9.5px;line-height:9.5px;font-weight:bold;font-size:9px">ПОКРЫТИЯ</div>
<div style="left:402px;top:301.5px;width:307px;height:1.0px;background:#f3f3f3"></div>
<svg style="left:405px;top:286px" width="14" height="16"><g fill="none" stroke="#111" stroke-width="1.1"><path d="M6 5.5 V1.2 H8 V5.5"/><rect x="2.5" y="5.5" width="10" height="3"/><path d="M3 8.5 V12.5 L0.8 14.8 H10.5 L12.5 12.3 V8.5"/></g><g fill="#111"><path d="M0.8 14.8 L3 12.8 L4 13.4 L2.5 15.2Z M4 14.9 L5.8 12.8 L6.8 13.4 L5.5 15.2Z M7 14.9 L8.6 12.8 L9.6 13.4 L8.5 15.2Z M10 14.9 L11.2 13 L12 13.4 L11 15.2Z"/></g></svg>
<div class="t " style="left:479.5px;top:288.77px;font-size:9.5px;line-height:9.5px;">Спецификация отделки потолков: 2 этаж</div>
<div style="left:402px;top:318.5px;width:307px;height:1.0px;background:#f3f3f3"></div>
<svg style="left:405px;top:303px" width="14" height="16"><g fill="none" stroke="#111" stroke-width="1.1"><path d="M6 5.5 V1.2 H8 V5.5"/><rect x="2.5" y="5.5" width="10" height="3"/><path d="M3 8.5 V12.5 L0.8 14.8 H10.5 L12.5 12.3 V8.5"/></g><g fill="#111"><path d="M0.8 14.8 L3 12.8 L4 13.4 L2.5 15.2Z M4 14.9 L5.8 12.8 L6.8 13.4 L5.5 15.2Z M7 14.9 L8.6 12.8 L9.6 13.4 L8.5 15.2Z M10 14.9 L11.2 13 L12 13.4 L11 15.2Z"/></g></svg>
<div class="t " style="left:479.5px;top:306.07px;font-size:9.5px;line-height:9.5px;">Спецификация отделки стен: 1 этаж</div>
<div style="left:403px;top:726px;width:97px;height:18px;box-sizing:border-box;border:1px solid #707070;border-radius:3px;background:linear-gradient(#f6f6f6,#ececec 45%,#dcdcdc 55%,#d3d3d3);"></div>
<div class="t " style="left:301.5px;width:300px;text-align:center;top:730.42px;font-size:9.5px;line-height:9.5px;">Новая...</div>
<div style="left:510px;top:726px;width:97px;height:18px;box-sizing:border-box;border:1px solid #707070;border-radius:3px;background:linear-gradient(#f6f6f6,#ececec 45%,#dcdcdc 55%,#d3d3d3);"></div>
<div class="t " style="left:408.5px;width:300px;text-align:center;top:730.42px;font-size:9.5px;line-height:9.5px;">Удалить</div>
<div style="left:658px;top:726px;width:31px;height:18px;box-sizing:border-box;border:1px solid #707070;border-radius:3px;background:linear-gradient(#f6f6f6,#ececec 45%,#dcdcdc 55%,#d3d3d3);"></div>
<svg style="left:666px;top:728px" width="16" height="14"><path d="M4.5 1.5 H9 L11.5 4 V12.5 H4.5 Z" fill="#fff" stroke="#222" stroke-width="1"/><path d="M1 7.5 H8 M6 5.5 L8.5 7.5 L6 9.5" fill="none" stroke="#3d78c0" stroke-width="1.2"/></svg>
<div style="left:691px;top:726px;width:31px;height:18px;box-sizing:border-box;border:1px solid #707070;border-radius:3px;background:linear-gradient(#f6f6f6,#ececec 45%,#dcdcdc 55%,#d3d3d3);"></div>
<svg style="left:698px;top:728px" width="18" height="14"><path d="M2.5 1.5 H7 L9.5 4 V12.5 H2.5 Z" fill="#fff" stroke="#222" stroke-width="1"/><path d="M6 7.5 H14 M12 5.5 L14.5 7.5 L12 9.5" fill="none" stroke="#3d78c0" stroke-width="1.2"/></svg>
<svg style="left:734.5px;top:85px" width="5" height="8"><path d="M4.5 0.5V7.5L0.5 4Z" fill="#111"/></svg>
<div style="left:750px;top:83px;width:399px;height:18px;background:#d9d9d9;border-radius:3px"></div>
<svg style="left:753px;top:89.5px" width="8" height="5"><path d="M0 0H7L3.5 4.5Z" fill="#222"/></svg>
<div class="t " style="left:766px;top:87.72px;font-size:9.5px;line-height:9.5px;font-weight:bold;font-size:9.2px">КРИТЕРИИ /  СПЕЦИФИКАЦИЯ НАПОЛЬНЫХ ПОКРЫТИЙ 1 ЭТАЖА</div>
<div style="left:750px;top:106px;width:380px;height:14px;background:linear-gradient(#fdfdfd,#f2f2f2);border-bottom:1px solid #dcdcdc;box-sizing:border-box"></div>
<div style="left:758px;top:106px;width:1px;height:14px;background:#e4e4e4"></div>
<div style="left:789px;top:106px;width:1px;height:14px;background:#e4e4e4"></div>
<div style="left:945px;top:106px;width:1px;height:14px;background:#e4e4e4"></div>
<div style="left:1060px;top:106px;width:1px;height:14px;background:#e4e4e4"></div>
<div style="left:1090px;top:106px;width:1px;height:14px;background:#e4e4e4"></div>
<div class="t " style="left:774px;top:108.42px;font-size:9.5px;line-height:9.5px;">(</div>
<div class="t " style="left:717px;width:300px;text-align:center;top:108.42px;font-size:9.5px;line-height:9.5px;">Критерии</div>
<div class="t " style="left:852px;width:300px;text-align:center;top:108.42px;font-size:9.5px;line-height:9.5px;">Значение</div>
<div class="t " style="left:1074px;top:108.42px;font-size:9.5px;line-height:9.5px;">)</div>
<div class="t " style="left:961px;width:300px;text-align:center;top:108.42px;font-size:9.5px;line-height:9.5px;">и/или</div>
<div style="left:750px;top:120px;width:384px;height:249px;background:#fff"></div>
<div style="left:1134px;top:120px;width:13px;height:249px;background:#f0f0f0"></div>
<svg style="left:1137px;top:126px" width="8" height="5"><path d="M0.5 4.2 L3.8 0.8 L7 4.2 Z" fill="#8a8a8a"/></svg>
<svg style="left:1137px;top:360px" width="8" height="5"><path d="M0.5 0.8 L3.8 4.2 L7 0.8 Z" fill="#8a8a8a"/></svg>
<svg style="left:752px;top:127px" width="6" height="8"><path d="M0.3 3.2H5.3L2.8 0.4Z M0.3 4.6H5.3L2.8 7.4Z" fill="#111"/></svg>
<svg style="left:752px;top:145px" width="6" height="8"><path d="M0.3 3.2H5.3L2.8 0.4Z M0.3 4.6H5.3L2.8 7.4Z" fill="#111"/></svg>
<div class="t " style="left:792px;top:125.92px;font-size:9.5px;line-height:9.5px;">Тип Элемента</div>
<div class="t " style="left:885px;top:125.92px;font-size:9.5px;line-height:9.5px;">совпадает с</div>
<svg style="left:946px;top:124px" width="14" height="13"><g fill="none" stroke="#111" stroke-width="1.1"><path d="M3.4 3.5 V0.8 H0.6 V11.6 H3.4 V9.3 H10.4 V11.6 H13.2 V5.1 H10.4 V0.8 H6.6"/><path d="M4.2 4.6 L6.3 1.6"/></g><rect x="4.3" y="6.3" width="4.6" height="1.3" fill="#888"/></svg>
<div class="t " style="left:963px;top:125.92px;font-size:9.5px;line-height:9.5px;">Зона</div>
<div class="t " style="left:1092px;top:125.92px;font-size:9.5px;line-height:9.5px;">И</div>
<div class="t " style="left:792px;top:143.72px;font-size:9.5px;line-height:9.5px;">Собственный Этаж</div>
<div class="t " style="left:885px;top:143.72px;font-size:9.5px;line-height:9.5px;">=</div>
<div class="t " style="left:947px;top:143.72px;font-size:9.5px;line-height:9.5px;">1. План первого эта...</div>
<div style="left:752px;top:375px;width:130px;height:18px;box-sizing:border-box;border:1px solid #707070;border-radius:3px;background:linear-gradient(#f6f6f6,#ececec 45%,#dcdcdc 55%,#d3d3d3);"></div>
<div style="left:864px;top:378px;width:1px;height:12px;background:#b0b0b0"></div>
<div class="t " style="left:658.0px;width:300px;text-align:center;top:379.42px;font-size:9.5px;line-height:9.5px;">Добавить Критерии...</div>
<svg style="left:869.0px;top:382.0px" width="8" height="5"><path d="M0 0H7L3.5 4.5Z" fill="#222"/></svg>
<div style="left:892px;top:375px;width:72px;height:18px;box-sizing:border-box;border:1px solid #c4c4c4;border-radius:3px;background:#f4f4f4"></div>
<div class="t " style="left:778px;width:300px;text-align:center;top:379.42px;font-size:9.5px;line-height:9.5px;color:#9a9a9a">Удалить</div>
<div style="left:750px;top:403px;width:399px;height:17px;background:#d9d9d9;border-radius:3px"></div>
<svg style="left:753px;top:409.0px" width="8" height="5"><path d="M0 0H7L3.5 4.5Z" fill="#222"/></svg>
<div class="t " style="left:766px;top:407.22px;font-size:9.5px;line-height:9.5px;font-weight:bold;font-size:9.2px">ПОЛЯ /  СПЕЦИФИКАЦИЯ НАПОЛЬНЫХ ПОКРЫТИЙ 1 ЭТАЖА</div>
<div style="left:750px;top:427px;width:382px;height:12px;background:linear-gradient(#fdfdfd,#f2f2f2);border-bottom:1px solid #dcdcdc;box-sizing:border-box"></div>
<div style="left:781px;top:427px;width:1px;height:12px;background:#e8e8e8"></div>
<div style="left:1071px;top:427px;width:1px;height:12px;background:#e8e8e8"></div>
<div style="left:1083px;top:427px;width:1px;height:12px;background:#e8e8e8"></div>
<div style="left:1097px;top:427px;width:1px;height:12px;background:#e8e8e8"></div>
<div style="left:1109px;top:427px;width:1px;height:12px;background:#e8e8e8"></div>
<div class="t " style="left:784px;top:428.12px;font-size:9.5px;line-height:9.5px;">Имя</div>
<svg style="left:1074px;top:428px" width="6" height="10"><path d="M2.8 0.5 V8.5" stroke="#111" stroke-width="1.1"/><path d="M0.5 6 L2.8 9.5 L5.1 6" fill="none" stroke="#111" stroke-width="1.1"/></svg>
<svg style="left:1086px;top:428px" width="9" height="10"><path d="M7.5 1 H1 L4.6 4.8 L1 8.8 H7.8" fill="none" stroke="#111" stroke-width="1.1"/></svg>
<svg style="left:1099px;top:427px" width="10" height="10"><path d="M1 9.5 L4.5 1.5" stroke="#333" stroke-width="1"/><path d="M4.5 1.5 L9 2.5 L6.8 6.5 L3 5.3Z" fill="#666"/></svg>
<div style="left:750px;top:439px;width:384px;height:234px;background:#fff"></div>
<div style="left:1134px;top:439px;width:13px;height:234px;background:#f0f0f0"></div>
<svg style="left:1137.5px;top:445px" width="8" height="5"><path d="M0.5 4.2 L3.8 0.8 L7 4.2 Z" fill="#8a8a8a"/></svg>
<svg style="left:1137.5px;top:663px" width="8" height="5"><path d="M0.5 0.8 L3.8 4.2 L7 0.8 Z" fill="#8a8a8a"/></svg>
<svg style="left:752px;top:445px" width="6" height="8"><path d="M0.3 3.2H5.3L2.8 0.4Z M0.3 4.6H5.3L2.8 7.4Z" fill="#111"/></svg>
<svg style="left:762px;top:443px" width="14" height="13"><g fill="none" stroke="#111" stroke-width="1.1"><path d="M3.4 3.5 V0.8 H0.6 V11.6 H3.4 V9.3 H10.4 V11.6 H13.2 V5.1 H10.4 V0.8 H6.6"/><path d="M4.2 4.6 L6.3 1.6"/></g><rect x="4.3" y="6.3" width="4.6" height="1.3" fill="#888"/></svg>
<div class="t " style="left:783.6px;top:444.22px;font-size:9.5px;line-height:9.5px;color:#26267a">Штриховка Поверхности</div>
<svg style="left:1074px;top:444px" width="6" height="10"><path d="M2.8 0.5 V8.5" stroke="#111" stroke-width="1.1"/><path d="M0.5 6 L2.8 9.5 L5.1 6" fill="none" stroke="#111" stroke-width="1.1"/></svg>
<svg style="left:752px;top:464px" width="6" height="8"><path d="M0.3 3.2H5.3L2.8 0.4Z M0.3 4.6H5.3L2.8 7.4Z" fill="#111"/></svg>
<svg style="left:762px;top:461px" width="14" height="13"><g fill="none" stroke="#111" stroke-width="1.1"><path d="M3.4 3.5 V0.8 H0.6 V11.6 H3.4 V9.3 H10.4 V11.6 H13.2 V5.1 H10.4 V0.8 H6.6"/><path d="M4.2 4.6 L6.3 1.6"/></g><rect x="4.3" y="6.3" width="4.6" height="1.3" fill="#888"/></svg>
<div class="t " style="left:783.6px;top:462.52px;font-size:9.5px;line-height:9.5px;color:#26267a">Номер Зоны</div>
<svg style="left:1074px;top:462px" width="6" height="10"><path d="M2.8 0.5 V8.5" stroke="#111" stroke-width="1.1"/><path d="M0.5 6 L2.8 9.5 L5.1 6" fill="none" stroke="#111" stroke-width="1.1"/></svg>
<svg style="left:752px;top:482px" width="6" height="8"><path d="M0.3 3.2H5.3L2.8 0.4Z M0.3 4.6H5.3L2.8 7.4Z" fill="#111"/></svg>
<svg style="left:762px;top:480px" width="14" height="13"><g fill="none" stroke="#111" stroke-width="1.1"><path d="M3.4 3.5 V0.8 H0.6 V11.6 H3.4 V9.3 H10.4 V11.6 H13.2 V5.1 H10.4 V0.8 H6.6"/><path d="M4.2 4.6 L6.3 1.6"/></g><rect x="4.3" y="6.3" width="4.6" height="1.3" fill="#888"/></svg>
<div class="t " style="left:783.6px;top:480.72px;font-size:9.5px;line-height:9.5px;color:#26267a">Название Зоны</div>
<svg style="left:1074px;top:480px" width="6" height="10"><path d="M2.8 0.5 V8.5" stroke="#111" stroke-width="1.1"/><path d="M0.5 6 L2.8 9.5 L5.1 6" fill="none" stroke="#111" stroke-width="1.1"/></svg>
<svg style="left:752px;top:500px" width="6" height="8"><path d="M0.3 3.2H5.3L2.8 0.4Z M0.3 4.6H5.3L2.8 7.4Z" fill="#111"/></svg>
<svg style="left:762px;top:497px" width="14" height="13"><g fill="none" stroke="#111" stroke-width="1.1"><path d="M3.4 3.5 V0.8 H0.6 V11.6 H3.4 V9.3 H10.4 V11.6 H13.2 V5.1 H10.4 V0.8 H6.6"/><path d="M4.2 4.6 L6.3 1.6"/></g><rect x="4.3" y="6.3" width="4.6" height="1.3" fill="#888"/></svg>
<div class="t " style="left:783.6px;top:498.42px;font-size:9.5px;line-height:9.5px;color:#1a1a1a">Измеряемая Площадь</div>
<svg style="left:1074px;top:498px" width="6" height="10"><path d="M2.8 0.5 V8.5" stroke="#111" stroke-width="1.1"/><path d="M0.5 6 L2.8 9.5 L5.1 6" fill="none" stroke="#111" stroke-width="1.1"/></svg>
<svg style="left:1086px;top:498px" width="9" height="10"><path d="M7.5 1 H1 L4.6 4.8 L1 8.8 H7.8" fill="none" stroke="#111" stroke-width="1.1"/></svg>
<svg style="left:752px;top:518px" width="6" height="8"><path d="M0.3 3.2H5.3L2.8 0.4Z M0.3 4.6H5.3L2.8 7.4Z" fill="#111"/></svg>
<svg style="left:765px;top:515px" width="10" height="13"><path d="M1.5 1 L8.5 7.5 L5.5 8 L7 11.5 L5.3 12.2 L3.8 8.8 L1.5 11 Z" fill="#9a9a9a" stroke="#1a1a1a" stroke-width="1"/></svg>
<div class="t " style="left:783.6px;top:516.82px;font-size:9.5px;line-height:9.5px;color:#26267a">Примечание</div>
<svg style="left:1074px;top:516px" width="6" height="10"><path d="M2.8 0.5 V8.5" stroke="#111" stroke-width="1.1"/><path d="M0.5 6 L2.8 9.5 L5.1 6" fill="none" stroke="#111" stroke-width="1.1"/></svg>
<div style="left:752px;top:695px;width:130px;height:17px;box-sizing:border-box;border:1px solid #707070;border-radius:3px;background:linear-gradient(#f6f6f6,#ececec 45%,#dcdcdc 55%,#d3d3d3);"></div>
<div style="left:864px;top:698px;width:1px;height:11px;background:#b0b0b0"></div>
<div class="t " style="left:658.0px;width:300px;text-align:center;top:698.92px;font-size:9.5px;line-height:9.5px;">Добавить Поля...</div>
<svg style="left:869.0px;top:701.5px" width="8" height="5"><path d="M0 0H7L3.5 4.5Z" fill="#222"/></svg>
<div style="left:892px;top:695px;width:89px;height:17px;box-sizing:border-box;border:1px solid #707070;border-radius:3px;background:linear-gradient(#f6f6f6,#ececec 45%,#dcdcdc 55%,#d3d3d3);"></div>
<div class="t " style="left:786.5px;width:300px;text-align:center;top:698.92px;font-size:9.5px;line-height:9.5px;">Удалить</div>
<div style="left:747px;top:720px;width:403px;height:1px;background:#c8c8c8"></div>
<div style="left:747px;top:721px;width:403px;height:1px;background:#ffffff"></div>
<div style="left:992px;top:727px;width:69px;height:17px;box-sizing:border-box;border:1px solid #707070;border-radius:3px;background:linear-gradient(#f6f6f6,#ececec 45%,#dcdcdc 55%,#d3d3d3);"></div>
<div class="t " style="left:876.5px;width:300px;text-align:center;top:730.92px;font-size:9.5px;line-height:9.5px;">Отменить</div>
<div style="left:1075px;top:727px;width:69px;height:17px;box-sizing:border-box;border:1px solid #3c7fb1;border-radius:3px;background:linear-gradient(#eaf6fd,#d9f0fc 45%,#bee6fd 55%,#a7d9f5);box-shadow:inset 0 0 0 1px #7fd0f5"></div>
<div class="t " style="left:959.5px;width:300px;text-align:center;top:730.92px;font-size:9.5px;line-height:9.5px;">OK</div>
<svg style="left:1148px;top:741px" width="8" height="8"><g fill="#b8b8b8"><rect x="5" y="1" width="1.3" height="1.3"/><rect x="3" y="3" width="1.3" height="1.3"/><rect x="5" y="3" width="1.3" height="1.3"/><rect x="1" y="5" width="1.3" height="1.3"/><rect x="3" y="5" width="1.3" height="1.3"/><rect x="5" y="5" width="1.3" height="1.3"/></g></svg>
</body></html>
